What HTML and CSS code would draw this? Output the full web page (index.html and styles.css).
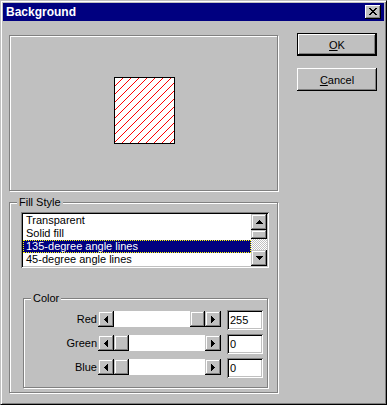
FILE: index.html
```html
<!DOCTYPE html>
<html>
	<head>
		<meta charset="UTF-8">
		<title>Background</title>
		<link rel="stylesheet" href="styles.css">
	</head>
	<body>
		<div class="window">
			<div class="titlebar">
				<span class="title">Background</span>
				<div class="close">
					<svg width="16" height="14" viewBox="0 0 16 14" shape-rendering="crispEdges"><path d="M4 3h2v1H4zM10 3h2v1h-2zM5 4h2v1H5zM9 4h2v1H9zM6 5h4v1H6zM7 6h2v1H7zM6 7h4v1H6zM5 8h2v1H5zM9 8h2v1H9zM4 9h2v1H4zM10 9h2v1h-2z" fill="#000"/></svg>
				</div>
			</div>
			<div class="main">
				<div class="left">
					<div class="preview etched">
						<div class="swatch">
							<svg width="59" height="65" shape-rendering="crispEdges">
								<defs>
									<pattern id="hatch" width="8" height="8" patternUnits="userSpaceOnUse">
										<path d="M7 0h1v1H7zM6 1h1v1H6zM5 2h1v1H5zM4 3h1v1H4zM3 4h1v1H3zM2 5h1v1H2zM1 6h1v1H1zM0 7h1v1H0z" fill="#f00"/>
									</pattern>
								</defs>
								<rect width="59" height="65" fill="url(#hatch)"/>
							</svg>
						</div>
					</div>
					<div class="group etched fill">
						<div class="group-label">Fill Style</div>
						<div class="listbox sunken">
							<div class="items">
								<div class="item">Transparent</div>
								<div class="item">Solid fill</div>
								<div class="item sel">135-degree angle lines</div>
								<div class="item">45-degree angle lines</div>
							</div>
							<div class="vscroll">
								<div class="sb-btn"><svg width="7" height="4" shape-rendering="crispEdges"><path d="M3 0h1v1H3zM2 1h3v1H2zM1 2h5v1H1zM0 3h7v1H0z"/></svg></div>
								<div class="vthumb sb-btn"></div>
								<div class="vtrack"></div>
								<div class="sb-btn"><svg width="7" height="4" shape-rendering="crispEdges"><path d="M0 0h7v1H0zM1 1h5v1H1zM2 2h3v1H2zM3 3h1v1H3z"/></svg></div>
							</div>
						</div>
						<div class="group etched color">
							<div class="group-label">Color</div>
							<div class="crow">
								<span class="clabel">Red</span>
								<div class="hscroll">
									<div class="sb-btn"><svg width="4" height="7" shape-rendering="crispEdges"><path d="M3 0h1v7H3zM2 1h1v5H2zM1 2h1v3H1zM0 3h1v1H0z"/></svg></div>
									<div class="htrack end"><div class="hthumb sb-btn"></div></div>
									<div class="sb-btn"><svg width="4" height="7" shape-rendering="crispEdges"><path d="M0 0h1v7H0zM1 1h1v5H1zM2 2h1v3H2zM3 3h1v1H3z"/></svg></div>
								</div>
								<div class="edit sunken">255</div>
							</div>
							<div class="crow">
								<span class="clabel">Green</span>
								<div class="hscroll">
									<div class="sb-btn"><svg width="4" height="7" shape-rendering="crispEdges"><path d="M3 0h1v7H3zM2 1h1v5H2zM1 2h1v3H1zM0 3h1v1H0z"/></svg></div>
									<div class="htrack"><div class="hthumb sb-btn"></div></div>
									<div class="sb-btn"><svg width="4" height="7" shape-rendering="crispEdges"><path d="M0 0h1v7H0zM1 1h1v5H1zM2 2h1v3H2zM3 3h1v1H3z"/></svg></div>
								</div>
								<div class="edit sunken">0</div>
							</div>
							<div class="crow">
								<span class="clabel">Blue</span>
								<div class="hscroll">
									<div class="sb-btn"><svg width="4" height="7" shape-rendering="crispEdges"><path d="M3 0h1v7H3zM2 1h1v5H2zM1 2h1v3H1zM0 3h1v1H0z"/></svg></div>
									<div class="htrack"><div class="hthumb sb-btn"></div></div>
									<div class="sb-btn"><svg width="4" height="7" shape-rendering="crispEdges"><path d="M0 0h1v7H0zM1 1h1v5H1zM2 2h1v3H2zM3 3h1v1H3z"/></svg></div>
								</div>
								<div class="edit sunken">0</div>
							</div>
						</div>
					</div>
				</div>
				<div class="buttons">
					<div class="btn default"><span><u>O</u>K</span></div>
					<div class="btn"><span><u>C</u>ancel</span></div>
				</div>
			</div>
		</div>
	</body>
</html>
```

FILE: styles.css
```css
*{
	margin:0;
	padding:0;
	box-sizing:border-box;
}
body{
	font-family:"Liberation Sans", Arial, sans-serif;
	font-size:11px;
	color:#000;
	background:#c0c0c0;
}
.window{
	width:387px;
	height:405px;
	background:#c0c0c0;
	border:1px solid;
	border-color:#c0c0c0 #000 #000 #c0c0c0;
	box-shadow:inset 1px 1px 0 #fff, inset -1px -1px 0 #808080;
	padding:2px;
}
.titlebar{
	height:18px;
	background:#000080;
	display:flex;
	align-items:center;
	justify-content:space-between;
	padding:0 3px;
}
.title{
	color:#fff;
	font-weight:bold;
	font-size:12px;
}
.close{
	width:16px;
	height:14px;
	background:#c0c0c0;
	box-shadow:inset -1px -1px 0 #000, inset 1px 1px 0 #fff, inset -2px -2px 0 #808080;
}
.close svg{
	display:block;
}
.main{
	display:flex;
	padding:12px 7px 0 6px;
}
.left{
	width:269px;
	margin-top:2px;
	margin-right:19px;
}
.etched{
	border:1px solid #808080;
	box-shadow:inset 1px 1px 0 #fff, 1px 1px 0 #fff;
}
.preview{
	height:156px;
	display:flex;
	align-items:center;
	justify-content:center;
	padding:0 0 5px 2px;
}
.swatch{
	width:61px;
	height:67px;
	border:1px solid #000;
	background:#fff;
}
.swatch svg{
	display:block;
}
.group{
	display:flex;
	flex-direction:column;
}
.group-label{
	align-self:flex-start;
	margin:-7px 0 0 7px;
	padding:0 2px;
	line-height:13px;
	background:#c0c0c0;
}
.fill{
	margin-top:11px;
	height:191px;
}
.sunken{
	background:#fff;
	box-shadow:inset 1px 1px 0 #808080, inset -1px -1px 0 #fff, inset 2px 2px 0 #000, inset -2px -2px 0 #c0c0c0;
	padding:2px;
}
.listbox{
	margin:3px 0 0 11px;
	width:248px;
	height:56px;
	display:flex;
}
.items{
	flex:1;
}
.item{
	height:13px;
	line-height:13px;
	padding-left:3px;
	white-space:nowrap;
}
.item.sel{
	background:#000080;
	color:#fff;
	border:1px dotted #ff0;
	line-height:11px;
	padding-left:2px;
}
.vscroll{
	width:16px;
	display:flex;
	flex-direction:column;
}
.sb-btn{
	width:16px;
	height:16px;
	flex:none;
	display:flex;
	align-items:center;
	justify-content:center;
	background:#c0c0c0;
	box-shadow:inset -1px -1px 0 #000, inset 1px 1px 0 #c0c0c0, inset -2px -2px 0 #808080, inset 2px 2px 0 #fff;
}
.sb-btn svg{
	display:block;
}
.vthumb{
	height:9px;
}
.vtrack{
	flex:1;
	background:repeating-conic-gradient(#fff 0 25%, #c0c0c0 0 50%) 0 0/2px 2px;
}
.color{
	margin:30px 0 0 13px;
	width:245px;
	height:90px;
}
.crow{
	display:flex;
	height:20px;
	margin-top:4px;
}
.color .group-label + .crow{
	margin-top:5px;
}
.clabel{
	width:74px;
	text-align:right;
	padding-right:1px;
	line-height:18px;
}
.hscroll{
	width:123px;
	height:16px;
	margin-top:1px;
	display:flex;
}
.htrack{
	flex:1;
	background:#fff;
	display:flex;
}
.htrack.end{
	justify-content:flex-end;
}
.hthumb{
	width:15px;
}
.edit{
	width:36px;
	height:20px;
	margin-left:6px;
	padding:0 3px;
	line-height:20px;
}
.buttons{
	display:flex;
	flex-direction:column;
	gap:12px;
}
.btn{
	width:80px;
	height:23px;
	display:flex;
	align-items:center;
	justify-content:center;
	background:#c0c0c0;
	box-shadow:inset -1px -1px 0 #000, inset 1px 1px 0 #fff, inset -2px -2px 0 #808080;
}
.btn.default{
	border:1px solid #000;
}
```
